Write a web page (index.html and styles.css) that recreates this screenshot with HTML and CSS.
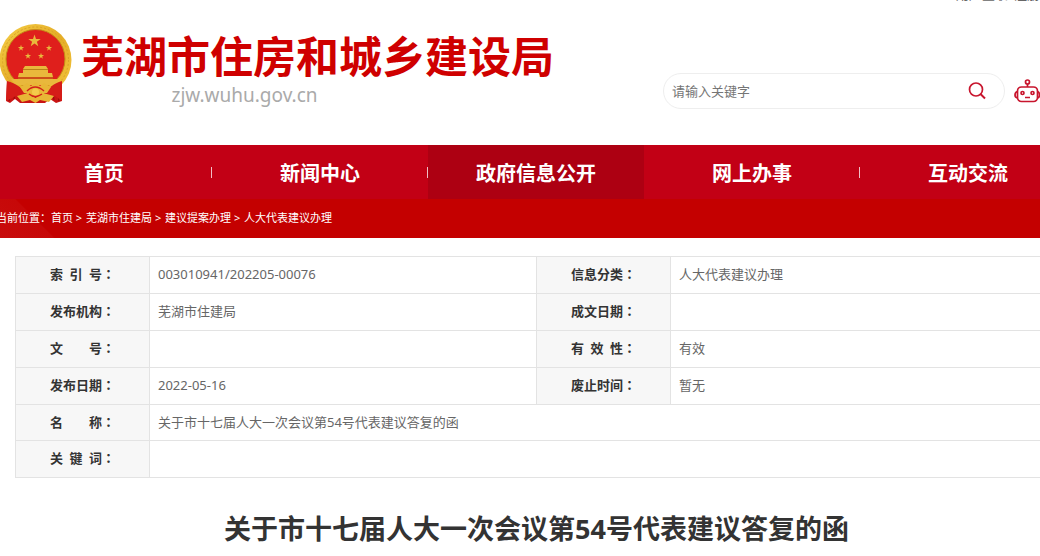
FILE: index.html
```html
<!DOCTYPE html>
<html lang="zh-CN">
<head>
<meta charset="utf-8">
<title>芜湖市住房和城乡建设局</title>
<link rel="stylesheet" href="styles.css">
</head>
<body>
<div class="topbar"><a href="#">用户登录</a><a href="#">注册</a></div>
<header class="header">
  <a class="brand" href="#">
    <svg class="emblem" viewBox="0 0 72 80" aria-hidden="true">
      <defs>
        <linearGradient id="gold" x1="0" y1="0" x2="1" y2="1"><stop offset="0" stop-color="#f5cf48"/><stop offset=".5" stop-color="#e5ad27"/><stop offset="1" stop-color="#f3c63d"/></linearGradient>
        <path id="star" d="M0-6.5 1.5-2H6.2L2.4.8 3.8 5.3 0 2.5-3.8 5.3-2.4.8-6.2-2H-1.5Z"/>
      </defs>
      <path fill="#c91414" d="M7 55H61L62 77 56 79 50 75 45 79H20L15 75 10 79 6 77Z"/>
      <path fill="none" stroke="#8e0b0b" d="M11 64 9 77M15 68 14 75M57 64 59 77M53 68 54 76"/>
      <circle cx="35.500" cy="36" r="36" fill="url(#gold)"/>
      <circle cx="35.500" cy="36" r="33" fill="none" stroke="#d9a227" stroke-width="1" stroke-dasharray="2 2"/>
      <circle cx="35.500" cy="35" r="29.500" fill="#df1f1c" stroke="#c48a17"/>
      <g fill="#e9b83c">
        <use href="#star" x="34.500" y="17"/>
        <use href="#star" transform="translate(21 24) scale(.5)"/><use href="#star" transform="translate(49 24) scale(.5)"/>
        <use href="#star" transform="translate(28 32) scale(.5)"/><use href="#star" transform="translate(41 32) scale(.5)"/>
        <path d="M25 42H46L48 45H23ZM23 46H48V49H52L53 53H18L19 49H23Z"/>
        <path d="M11 55H59L56 61H15Z"/>
      </g>
      <path stroke="#b98217" d="M23 45.500H48M18 54H53" fill="none"/>
      <path fill="#d51c18" d="M7 57C17 59 20 65 28 67L24 76 16 72 6 77ZM62 57C53 59 50 65 43 67L47 76 55 72 62 77Z"/>
      <path fill="#e8b636" d="M20 63 27 59 31 62 35.500 58 40 62 44 59 51 63 47 69H24ZM17 72 28 69 35.500 74 43 69 54 72 49 78 40 76 35.500 79 30 76 22 78Z"/>
      <path fill="none" stroke="#d22019" stroke-width="1.500" d="M27 67Q35 59 44 67M29 70Q35 75 42 70"/>
      <circle cx="35.500" cy="68" r="3.500" fill="#f4cb4b"/>
    </svg>
    <span class="brand-text"><strong class="brand-name">芜湖市住房和城乡建设局</strong><span class="brand-url">zjw.wuhu.gov.cn</span></span>
  </a>
  <div class="tools">
    <form class="search" role="search">
      <input class="search-input" type="text" placeholder="请输入关键字" aria-label="请输入关键字">
      <button class="icon-button" type="button" aria-label="搜索"><svg width="18" height="18" viewBox="0 0 18 18" fill="none" stroke="#c8152d" stroke-width="1.700"><circle cx="8" cy="7.500" r="6.500"/><path d="m12.500 12 4.500 4.500" stroke-width="2"/></svg></button>
    </form>
    <a class="robot" href="#" aria-label="智能问答"><svg width="26" height="24" viewBox="0 0 26 24" fill="none" stroke="#c8152d" stroke-width="1.700"><circle cx="13.500" cy="3" r="2"/><path d="M13.500 5V8M3.500 12.500C1.500 13 1 14 1 16S1.500 18.500 3.500 19M23.500 12.500C25 13 25.500 14 25.500 16S25 18.500 23.500 19M11 18.500H16"/><rect x="3.500" y="8" width="20" height="14.500" rx="4"/><circle cx="8.500" cy="14" r="1.500"/><circle cx="18.500" cy="14" r="1.500"/></svg></a>
  </div>
</header>
<nav class="nav">
  <div class="nav-list">
    <a class="nav-item divided" href="#">首页</a>
    <a class="nav-item divided" href="#">新闻中心</a>
    <a class="nav-item active" href="#">政府信息公开</a>
    <a class="nav-item divided" href="#">网上办事</a>
    <a class="nav-item" href="#">互动交流</a>
  </div>
</nav>
<div class="crumbs"><div class="crumb-list"><span>当前位置<span class="colon">：</span></span><a href="#">首页</a> &gt; <a href="#">芜湖市住建局</a> &gt; <a href="#">建议提案办理</a> &gt; <a href="#">人大代表建议办理</a></div></div>
<main class="content">
  <table class="info">
    <colgroup><col class="col-label"><col><col class="col-label"><col></colgroup>
    <tr><th scope="row"><span class="label">索 引 号</span><span class="colon">：</span></th><td>003010941/202205-00076</td><th scope="row"><span class="label">信息分类</span><span class="colon">：</span></th><td>人大代表建议办理</td></tr>
    <tr><th scope="row"><span class="label">发布机构</span><span class="colon">：</span></th><td>芜湖市住建局</td><th scope="row"><span class="label">成文日期</span><span class="colon">：</span></th><td></td></tr>
    <tr><th scope="row"><span class="label">文 号</span><span class="colon">：</span></th><td></td><th scope="row"><span class="label">有 效 性</span><span class="colon">：</span></th><td>有效</td></tr>
    <tr><th scope="row"><span class="label">发布日期</span><span class="colon">：</span></th><td>2022-05-16</td><th scope="row"><span class="label">废止时间</span><span class="colon">：</span></th><td>暂无</td></tr>
    <tr class="name-row"><th scope="row"><span class="label">名 称</span><span class="colon">：</span></th><td colspan="3">关于市十七届人大一次会议第54号代表建议答复的函</td></tr>
    <tr><th scope="row"><span class="label">关 键 词</span><span class="colon">：</span></th><td colspan="3"></td></tr>
  </table>
  <h1 class="title">关于市十七届人大一次会议第54号代表建议答复的函</h1>
</main>
</body>
</html>
```
FILE: styles.css
```css
* { box-sizing: border-box; }
body {
  margin: 0;
  overflow-x: hidden;
  background: #fff;
  color: #666;
  font: 13px/20px "Noto Sans", "Noto Sans CJK SC", sans-serif;
}
a { color: inherit; text-decoration: none; }
svg { display: block; }
.topbar {
  display: flex;
  justify-content: flex-end;
  align-items: flex-end;
  gap: 6px;
  height: 2px;
  overflow: hidden;
  line-height: 16px;
}
.header {
  display: flex;
  justify-content: space-between;
  align-items: flex-start;
  padding: 22px 0 31px;
}
.brand { display: flex; gap: 9px; }
.emblem { width: 72px; height: 80px; }
.brand-text { display: flex; flex-direction: column; align-items: center; padding-top: 8px; }
.brand-name {
  color: #cf0000;
  font: 700 43px/44px "Noto Sans CJK SC", sans-serif;
  white-space: nowrap;
}
.brand-url { margin-right: 146px; color: #aaa; font-size: 19px; line-height: 38px; }
.tools { display: flex; align-items: center; gap: 9px; padding-top: 49px; }
.search {
  display: flex;
  align-items: center;
  width: 342px;
  height: 36px;
  padding: 0 18px 0 8px;
  border: 1px solid #eee;
  border-radius: 18px;
}
.search-input {
  flex: 1;
  min-width: 0;
  padding: 0;
  border: 0;
  outline: 0;
  background: none;
  font: inherit;
}
.search-input::placeholder { color: #757575; }
.icon-button { padding: 0; border: 0; background: none; }
.nav { overflow: hidden; background: #c20015; }
.nav-list { display: flex; margin: 0 -36px 0 -4px; }
.nav-item {
  display: flex;
  flex: 1 1 0;
  justify-content: center;
  align-items: center;
  position: relative;
  height: 54px;
  padding-top: 4px;
  color: #fff;
  font-size: 20px;
  font-weight: 700;
  line-height: 28px;
}
.nav-item.active { background: #ad0012; }
.nav-item.divided::after {
  content: "";
  position: absolute;
  top: 22px;
  right: 0;
  width: 1px;
  height: 11px;
  background: #f0bfc5;
}
.crumbs {
  overflow: hidden;
  padding-bottom: 2px;
  background: linear-gradient(45deg, #c80c0c 0, #c70808 38px, #c40000 39px);
  color: #fff;
  font-size: 11px;
  line-height: 37px;
  white-space: nowrap;
}
.crumb-list { margin-left: -4px; }
.crumb-list a + a { margin-left: 1px; }
.colon { font-family: "Noto Sans CJK TC", sans-serif; }
.content { margin-right: -18px; padding: 18px 0 0 15px; }
.info { width: 100%; table-layout: fixed; border-collapse: collapse; }
.col-label { width: 134px; }
.info th, .info td { height: 37px; padding: 0 8px 2px; border: 1px solid #e3e3e3; }
.info .name-row th, .info .name-row td { height: 36px; }
.info th { padding: 0 0 2px; background: #f7f7f7; color: #333; font-weight: 700; white-space: nowrap; }
.info td { text-align: left; }
.label { display: inline-block; width: 52px; text-align: justify; text-align-last: justify; }
.title {
  margin: 31px 0 0;
  color: #333;
  font-size: 27px;
  font-weight: 700;
  line-height: 40px;
  text-align: center;
}
```
